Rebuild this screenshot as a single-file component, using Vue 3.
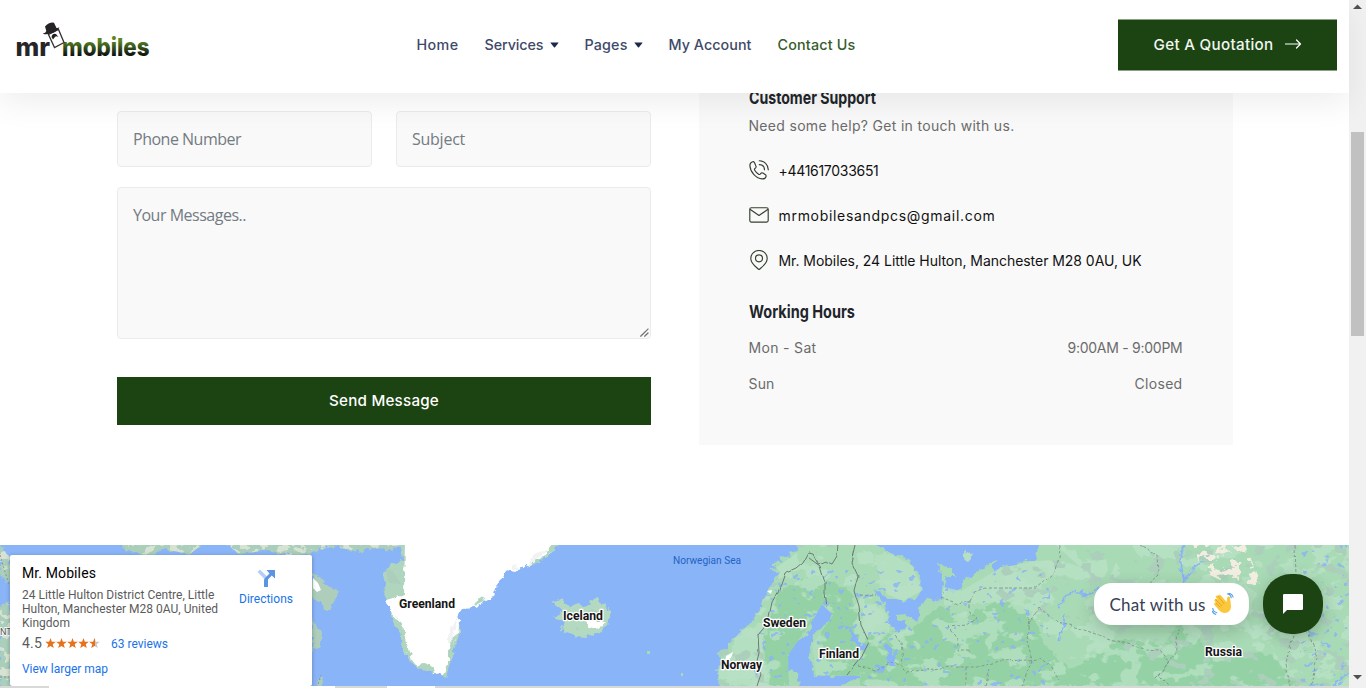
<script setup>
const nav = [
  { label: 'Home', w: 42 },
  { label: 'Services', w: 59, menu: true },
  { label: 'Pages', w: 43, menu: true },
  { label: 'My Account', w: 83 },
  { label: 'Contact Us', w: 78, active: true }
]
const hours = [
  { day: 'Mon - Sat', dw: 68, time: '9:00AM - 9:00PM', tw: 115 },
  { day: 'Sun', dw: 26, time: 'Closed', tw: 48 }
]
const labels = [
  { t: 'Greenland', x: 399, y: 608, w: 56 },
  { t: 'Iceland', x: 563, y: 620, w: 40 },
  { t: 'Sweden', x: 763, y: 627, w: 43 },
  { t: 'Finland', x: 819, y: 658, w: 40 },
  { t: 'Norway', x: 721, y: 669, w: 41 },
  { t: 'Russia', x: 1205, y: 656, w: 37 }
]

// Tracks a single-line label so that it fills the given width.
const vFit = {
  mounted(el, { value }) {
    const natural = el.getBoundingClientRect().width
    el.style.letterSpacing = (value - natural) / el.textContent.length + 'px'
  }
}
</script>

<template>
  <div class="screen">
    <div class="page">
      <header class="header">
        <svg class="logo" width="140" height="48" viewBox="12 16 140 48">
          <defs>
            <linearGradient id="leaf" x1="0" y1="0" x2="0" y2="1">
              <stop offset=".3" stop-color="#5d8422" />
              <stop offset=".52" stop-color="#38541c" />
              <stop offset=".78" stop-color="#10150f" />
            </linearGradient>
          </defs>
          <text class="brand" x="15.500" y="55.500" textLength="34.500" lengthAdjust="spacingAndGlyphs" fill="#282529">mr</text>
          <text class="brand" x="62" y="55.500" textLength="87.500" lengthAdjust="spacingAndGlyphs" fill="url(#leaf)">mobiles</text>
          <path d="M48.500 34.500 58.500 29.500 64 42.500 54.500 47.500Z" fill="#fff" stroke="#333" stroke-width="1.300" />
          <path d="M51.500 37q.8-4 4.500-3l2.500 3q-2.500-1.300-3.500 0l-2 2.500Z" fill="#222" />
          <path d="M42.800 33.500q3-.5 3.500-2.500l-1.300-4.500q4-4.500 9-3.800l2.500 5.300q1.500.3 3-.7-2 4-8 6-6 2-8.700.2" fill="#262327" />
        </svg>
        <nav class="nav">
          <a v-for="n in nav" :key="n.label" :class="{ active: n.active }">
            <span v-fit="n.w">{{ n.label }}</span>
            <svg v-if="n.menu" width="9" height="6" viewBox="0 0 9 6"><path d="M.8.5h7.400q.7 0 .2.600L5 5.200q-.5.500-1 0L.6 1.100Q.1.500.8.500" fill="#1b2850" /></svg>
          </a>
        </nav>
        <a class="quote">
          <span v-fit="120">Get A Quotation</span>
          <svg width="17" height="12" viewBox="0 0 17 12"><path d="M.5 6h15M11.500 2l4 4-4 4" fill="none" stroke="#fff" stroke-width="1.200" stroke-linecap="round" stroke-linejoin="round" /></svg>
        </a>
      </header>

      <main class="main">
        <form class="form">
          <div class="field"><span v-fit="108">Phone Number</span></div>
          <div class="field"><span v-fit="53">Subject</span></div>
          <div class="field message">
            <span v-fit="113">Your Messages..</span>
            <svg class="grip" width="9" height="9" viewBox="0 0 9 9"><path d="M.5 8.500l8-8M4.500 8.500l4-4" stroke="#444" stroke-width="1.100" stroke-dasharray="1.100 .3" /></svg>
          </div>
          <button type="button" class="send"><span v-fit="110">Send Message</span></button>
        </form>

        <aside class="support">
          <svg class="heading" width="130" height="24"><text x="0" y="18" textLength="127" lengthAdjust="spacingAndGlyphs">Customer Support</text></svg>
          <p class="help"><span v-fit="266">Need some help? Get in touch with us.</span></p>
          <div class="contact">
            <svg width="20" height="20" viewBox="0 0 20 20" class="icon">
              <path d="M3.500 1.700C2 2.200.8 3.700.9 5.800c.4 6.500 6.300 12.700 12.300 13.100 2.200.1 3.600-1.100 3.900-2.600.1-.6-.1-1.100-.6-1.500l-2.600-1.700c-.8-.5-1.500-.4-2.100.3l-.6.700c-.5.500-1 .5-1.600.1-1.600-1.100-3-2.500-3.900-4-.4-.7-.3-1.200.2-1.700l.7-.6c.6-.6.7-1.200.3-2L5.400 2.500c-.5-.8-1.100-1.100-1.900-.8Z" />
              <path d="M10.300.8c5 .1 8.900 3.900 9 9M10.300 4.600c3 .1 5.100 2.200 5.200 5.200" />
            </svg>
            <span v-fit="100">+441617033651</span>
          </div>
          <div class="contact">
            <svg width="20" height="20" viewBox="0 0 20 20" class="icon">
              <rect x=".8" y="2.700" width="18.400" height="14.400" rx="1.500" /><path d="m1.300 4.500 8.700 6 8.700-6" />
            </svg>
            <span v-fit="217">mrmobilesandpcs@gmail.com</span>
          </div>
          <div class="contact">
            <svg width="20" height="20" viewBox="0 0 20 20" class="icon">
              <path d="M10 .5C5.300.5 1.800 4 1.800 8.400 1.800 13.500 6.200 16.200 10 19.600c3.800-3.400 8.200-6.100 8.200-11.200C18.200 4 14.700.5 10 .5Z" /><circle cx="10" cy="8.300" r="3.500" />
            </svg>
            <span v-fit="363">Mr. Mobiles, 24 Little Hulton, Manchester M28 0AU, UK</span>
          </div>
          <svg class="heading hours-title" width="130" height="24"><text x="0" y="18" textLength="106" lengthAdjust="spacingAndGlyphs">Working Hours</text></svg>
          <div v-for="h in hours" :key="h.day" class="hours">
            <span v-fit="h.dw">{{ h.day }}</span><span v-fit="h.tw">{{ h.time }}</span>
          </div>
        </aside>
      </main>

      <section class="map">
        <svg class="canvas" width="1349" height="141" viewBox="0 545 1349 141">
          <defs>
            <filter id="coast" filterUnits="userSpaceOnUse" x="0" y="545" width="1349" height="141">
              <feTurbulence type="fractalNoise" baseFrequency=".16" numOctaves="2" seed="4" />
              <feDisplacementMap in="SourceGraphic" scale="8" xChannelSelector="R" yChannelSelector="G" />
            </filter>
            <filter id="border" filterUnits="userSpaceOnUse" x="0" y="545" width="1349" height="141">
              <feTurbulence type="fractalNoise" baseFrequency=".09" numOctaves="1" seed="6" />
              <feDisplacementMap in="SourceGraphic" scale="5" xChannelSelector="R" yChannelSelector="G" />
            </filter>
            <filter id="light" filterUnits="userSpaceOnUse" x="0" y="545" width="1349" height="141" color-interpolation-filters="sRGB">
              <feTurbulence type="fractalNoise" baseFrequency=".035 .05" numOctaves="4" seed="12" />
              <feColorMatrix values="0 0 0 0 .735  0 0 0 0 .89  0 0 0 0 .785  22 0 0 0 -11.600" />
              <feComposite in2="SourceAlpha" operator="in" />
            </filter>
            <filter id="shade" filterUnits="userSpaceOnUse" x="0" y="545" width="1349" height="141" color-interpolation-filters="sRGB">
              <feTurbulence type="fractalNoise" baseFrequency=".06 .08" numOctaves="3" seed="31" />
              <feColorMatrix values="0 0 0 0 .67  0 0 0 0 .81  0 0 0 0 .735  0 20 0 0 -12.300" />
              <feComposite in2="SourceAlpha" operator="in" />
            </filter>
            <filter id="sand" filterUnits="userSpaceOnUse" x="0" y="545" width="1349" height="141" color-interpolation-filters="sRGB">
              <feTurbulence type="fractalNoise" baseFrequency=".1 .13" numOctaves="3" seed="8" />
              <feColorMatrix values="0 0 0 0 .95  0 0 0 0 .93  0 0 0 0 .88  0 0 20 0 -10.600" />
              <feComposite in2="SourceAlpha" operator="in" />
            </filter>
            <filter id="lakes" filterUnits="userSpaceOnUse" x="0" y="545" width="1349" height="141" color-interpolation-filters="sRGB">
              <feTurbulence type="fractalNoise" baseFrequency=".13 .16" numOctaves="2" seed="19" />
              <feColorMatrix values="0 0 0 0 .54  0 0 0 0 .705  0 0 0 0 .97  0 0 25 0 -16.800" />
              <feComposite in2="SourceAlpha" operator="in" />
            </filter>
            <path id="eurasia" d="M796 540 799 551 789 553 791 558 779 556 783 562 772 563 776 568 767 571 780 572 774 580 769 590 763 600 762 608 754 618 745 628 738 634 731 642 727 648 718 653 720 660 718 672 719 690H1355V540H1103L1106 554 1108 570 1098 589 1104 592 1114 575 1116 562 1124 568 1129 580 1138 578 1130 564 1118 554 1113 540H1050L1062 555 1080 567 1078 559 1067 545 1040 540 1035 561 1024 561 1012 564 1000 568 990 577 996 559 983 568 973 575 963 582 961 591 952 592 944 587 947 577 955 577 952 568 937 564 943 578 941 601 929 598 920 607 918 620 910 617 904 614 898 615 898 621 907 620 905 630 895 632 889 624 886 607 873 589 889 597 904 601 917 598 923 590 921 577 912 565 903 556 889 553 867 540Z" />
            <path id="forest" d="M780 590 815 575 850 590 857 620 870 636 887 630 900 640 920 621 940 607 962 618 1000 600 1030 608 1045 645 1070 670 1120 640 1165 645 1180 620 1210 650 1270 655 1300 686H770L763 645Z" />
            <path id="arctic" d="M0 540H120L124 549 150 556 162 549 190 554 206 541 222 540 239 554 270 550 290 556 310 552 335 546 350 550 361 552 370 547 385 549 402 545V540H402Z M0 606 10 602V690H0Z M0 545 10 558V585L0 575Z" />
          </defs>
          <rect y="545" width="1349" height="141" fill="#8ab4f8" />

          <g filter="url(#coast)">
            <use href="#eurasia" fill="#a8dab5" />
            <path d="M815 607 822 604 830 606 833 615 827 623 818 630 812 638 810 647 812 670 815 675 837 677 857 672 862 677 847 682 837 690H800L797 673 787 670 788 655 793 643 807 635 813 620Z" fill="#8ab4f8" />
            <use href="#arctic" fill="#a9cfbb" />
            <path d="M312 573 322 578 328 586 339 591 335 600 328 613 321 606 312 598Z M312 618 322 634 321 646 312 651Z M320 675 324 686H316Z M386 545 394 547 392 552 385 550Z" fill="#aecdbb" />
            <path d="M400 540 403 560 388 567 383 580 384 594 390 606 393 623 400 633 402 647 409 660 417 669 433 671 446 677 454 650 460 632 448 560Z" fill="#b0d5be" />
            <path d="M405 540H557L549 555 527 565 515 572 506 570 498 583 493 597 483 603 475 607 462 608 458 613 459 623 455 643 448 650 448 663 442 677 433 670 424 664 417 667 409 653 405 640 403 622 392 615 386 600 404 595Z" fill="#fff" />
            <path d="M552 603 562 598 570 607 577 602 586 607 595 598 605 604 611 613 608 624 600 634 585 637 574 636 562 631 565 621 553 618 563 611Z" fill="#b3dac0" />
            <path d="M591 616 606 621 600 628 592 629 586 622Z" fill="#fff" />
            <ellipse cx="968" cy="556" rx="5" ry="5" fill="#b8dfc5" />
            <path d="M446 641 458 614 452 646Z M536 553 548 550 525 569Z M513 563 520 570 510 568Z" fill="#f1f2f3" />
            <path d="M543 557 552 545H558L547 556 536 563 528 565ZM452 640 457 634 454 646 448 650ZM475 605 480 597 486 600ZM417 667 429 663 434 672Z" fill="#b0d5be" />
          </g>

          <clipPath id="land"><path d="M796 540 799 551 776 568 780 572 763 600 745 628 718 653 719 690H789L788 655 813 620 822 604 833 615 812 645 816 675 860 676V690H1355V540H1113L1135 577 1125 578 1116 562 1104 592 1098 589 1108 570 1103 540H1050L1080 567 1060 560 1035 561 1000 568 961 591 944 587 941 601 920 607 918 620 904 631 895 632 889 624 886 607 873 589 904 601 923 590 912 565 889 553 867 540Z" /></clipPath>
          <g clip-path="url(#land)">
            <use href="#forest" fill="#94d2a5" filter="url(#coast)" />
            <use href="#eurasia" filter="url(#light)" opacity=".7" />
            <path d="M875 553 900 556 922 575V590L905 600 880 590ZM735 640 763 620V686H725ZM943 565 1049 545 1060 565 1030 600 945 605ZM862 605 885 607 890 630 880 640 864 630Z" fill="#b9e1c5" opacity=".75" filter="url(#coast)" />
            <path d="M1020 545H1349V686H1180L1080 620 980 600Z M719 640H764V686H719Z M770 590 835 545H770Z" filter="url(#shade)" />
            <path d="M1193 545H1245L1260 580 1257 596 1230 585 1202 571Z" filter="url(#sand)" />
            <path d="M770 570H1050V686H750Z M1300 545H1349V686H1300Z" filter="url(#lakes)" opacity=".8" />
          </g>
          <use href="#arctic" filter="url(#shade)" /><use href="#arctic" filter="url(#sand)" opacity=".65" />
          <path d="M561 604 606 605 607 632 566 630Z M386 569 400 570 402 602 391 600Z" filter="url(#shade)" />
          <path d="M313 578 318 583 321 590 317 592 313 588Z M726 656 733 652 731 658 725 661Z M767 591 772 590 771 594Z" fill="#fff" />
          <path d="M647 651h3v3h-3Z M681 673h2v3h-2Z" fill="#a8dab5" />

          <g fill="none" stroke="#8ab4f8" stroke-width="1.800" filter="url(#coast)">
            <path d="M1100 588 1087 595 1075 591 1065 597 1059 606M1065 615 1061 635 1059 642M1183 545 1180 562 1185 581M1185 579 1193 568 1203 562M1321 642 1330 647M1349 672 1333 684" />
            <path d="M885 645 891 652 893 662 886 658M850 630 856 640 864 650M876 665 885 668" stroke-width="4" />
          </g>
          <g fill="none" stroke="#6d7a75" stroke-width="1" filter="url(#border)">
            <path d="M838 545 837 556 832 564 825 561 818 564 813 554 808 553 803 562 796 568 785 573 779 590 772 602 768 622 758 634 759 653 756 665 761 674 757 686M809 558 820 566 825 583 825 592 827 607M855 545 851 562 858 577 854 590 859 606 861 625 869 642 863 654 847 674" />
          </g>
          <g fill="none" stroke="#80948a" stroke-width=".9" stroke-dasharray="3 2" filter="url(#border)">
            <path d="M858 665 875 670 890 663 903 665 906 672 925 670 950 667 977 667 1000 661 1029 660M895 635 901 642 903 663M941 597 958 604 970 601 970 612 977 618 966 625 949 627 958 639 958 650 970 650M966 667V686M985 686 990 670M970 601 975 592 986 588H1036L1052 575 1059 560 1060 545M1029 616 1027 642 1032 660 1022 686M1039 608 1054 619 1072 626 1090 632 1110 639 1130 645 1145 649 1160 650 1170 662 1158 675 1169 686M1039 608 1027 626M1139 545 1157 555 1158 575 1145 587M1155 678 1175 655 1179 628M1295 545 1296 575 1306 607 1300 620 1290 643 1286 665 1290 686M1306 625 1317 658 1311 686M860 594 876 595M1029 661 1040 658 1050 666 1059 680" />
          </g>
          <path d="M0 555 9 585M0 677H9M318 684 321 675" stroke="#89948f" stroke-dasharray="2 2" fill="none" />
          <text x="0" y="635" class="small-label">NT</text>
          <text x="673" y="564" class="sea" textLength="68" lengthAdjust="spacingAndGlyphs">Norwegian Sea</text>
          <text v-for="l in labels" :key="l.t" class="country" :x="l.x" :y="l.y" :textLength="l.w" lengthAdjust="spacingAndGlyphs">{{ l.t }}</text>
        </svg>

        <div class="place">
          <div class="place-info">
            <div class="place-name"><span v-fit="74">Mr. Mobiles</span></div>
            <div class="address">24 Little Hulton District Centre, Little<br />Hulton, Manchester M28 0AU, United<br />Kingdom</div>
            <div class="rating">
              <span v-fit="20">4.5</span>
              <svg width="55" height="11" viewBox="0 0 55 11">
                <defs>
                  <path id="star" d="m5.500 0 1.350 3.700 3.950.15-3.100 2.430L8.800 10.100 5.500 7.900 2.200 10.100l1.100-3.820L.2 3.850l3.950-.15Z" />
                  <linearGradient id="half"><stop offset=".55" stop-color="#e7711b" /><stop offset=".55" stop-color="#c8c8c8" /></linearGradient>
                </defs>
                <use v-for="i in 5" :key="i" href="#star" :x="(i - 1) * 11" :fill="i === 5 ? 'url(#half)' : '#e7711b'" />
              </svg>
              <a v-fit="57">63 reviews</a>
            </div>
            <a class="larger" v-fit="86">View larger map</a>
          </div>
          <div class="directions">
            <svg width="20" height="20" viewBox="0 0 20 20">
              <path d="M4 1.500 1.500 4 9.500 12l2.500-2.500Z" fill="#b7cff5" />
              <path d="M8 19V12.500q0-1.500 1-2.500l4.500-4.500L10.500 2H19v8.500l-3.200-3L12 11.500V19Z" fill="#5b94e3" />
            </svg>
            <a v-fit="54">Directions</a>
          </div>
        </div>

        <div class="chat">
          <div class="bubble">
            <span v-fit="96">Chat with us</span>
            <svg width="22" height="22" viewBox="0 0 22 22">
              <path d="M3.200 6.300C4 5.300 5 5.700 5.500 6.300L3.900 4.600C3.200 3 5 2 6 3L6.500 2.300C7.500 1 9 2 9.400 3l5.200 6 .5-3.800c.2-2.500 3-2 3 .1l.9 7.700c.3 4-2.600 7-6.200 7-2.800 0-4.500-1.500-6.100-3.300L2.500 12C1.300 10.500 2.700 9.200 4 10L2.300 7.900Z" fill="#fbc83d" />
              <path d="m4 10 4.300 4.500M3.200 6.300l7 6.700M6 3l6.300 8" stroke="#e39b22" stroke-width=".8" fill="none" />
              <path d="M15 .8q4 .7 4.300 4.500M16.500.1q4 .7 4.800 4.400M.7 15q.4 4 4.500 4.800M.2 18q1 2.700 4 3.500" stroke="#4b9ee8" stroke-width="1.100" fill="none" />
            </svg>
          </div>
          <div class="launcher">
            <svg width="20" height="20" viewBox="0 0 20 20"><path d="M1.300 0h17.400Q20 0 20 1.300v13.400q0 1.300-1.300 1.300H4L0 20V1.300Q0 0 1.300 0Z" fill="#fff" /></svg>
          </div>
        </div>
      </section>
      <footer class="edge"><i /><i /></footer>
    </div>

    <div class="scrollbar">
      <svg width="9" height="5" viewBox="0 0 9 5"><path d="M0 5 4.500.500 9 5Z" fill="#505050" /></svg>
      <div class="thumb" />
      <svg width="9" height="5" viewBox="0 0 9 5"><path d="M0 0h9L4.500 4.500Z" fill="#505050" /></svg>
    </div>
  </div>
</template>

<style>
html, body { margin: 0; overflow: hidden; background: #fff; }
</style>

<style scoped>
.screen { display: flex; width: 1366px; height: 688px; overflow: hidden; font-family: Inter, "Open Sans", sans-serif; }
.screen * { box-sizing: border-box; }
.screen span, .screen a { white-space: nowrap; }
.page { width: 1349px; height: 688px; display: flex; flex-direction: column; }
svg { display: block; flex: none; }
.header { position: relative; z-index: 2; height: 93px; flex: none; display: flex; align-items: center; background: #fff; box-shadow: 0 10px 30px rgba(0, 0, 0, .07); }
.logo { margin: -13px 0 0 12px; }
.brand { font: 800 25px Inter, sans-serif; }
.nav { display: flex; gap: 26px; margin: -4px 0 0 264.500px; color: #404969; font-size: 14.300px; font-weight: 450; line-height: 20px; }
.nav a { display: flex; align-items: center; gap: 6px; }
.nav .active { color: #355c2d; }
.quote { width: 219px; height: 52px; margin: -5px 12px 0 auto; padding-bottom: 1px; display: flex; align-items: center; justify-content: center; gap: 11px; background: #1b4412; border: solid #8ba086; border-width: 1px 0; color: #f2f5f1; font-size: 15.200px; font-weight: 450; position: relative; top: .5px; }
.main { height: 452px; flex: none; display: flex; gap: 48px; padding-left: 117px; }
.form { width: 534px; display: grid; grid-template-columns: 255px 255px; grid-template-rows: 56px 152px 48px; column-gap: 24px; row-gap: 20px; padding-top: 18px; }
.field { background: #f9f9f9; border: 1px solid #ebebeb; border-radius: 4px; padding: 15px 15px; color: #737b83; font: 16px/24px "Open Sans", sans-serif; }
.message { grid-column: 1 / 3; position: relative; }
.grip { position: absolute; right: 1px; bottom: 1px; }
.send { grid-column: 1 / 3; margin-top: 18px; height: 48px; padding: 0 0 1px; border: 0; background: #1b4412; color: #fff; font: 450 15.200px Inter, sans-serif; }
.support { width: 534px; height: 370px; margin-top: -18px; padding: 11px 50.500px 0 49.500px; background: #f9f9f9; color: #6b6b6b; font-size: 14px; line-height: 22px; }
.heading { fill: #212529; font: 700 17.800px Inter, sans-serif; }
.help { margin: 5px 0 0; height: 22px; }
.contact { height: 22px; margin-top: 23px; display: flex; align-items: center; gap: 10px; color: #111; }
.contact span { padding-top: 2px; }
.help + .contact { margin-top: 22px; }
.icon { fill: none; stroke: #34402f; stroke-width: 1.150; stroke-linejoin: round; stroke-linecap: round; }
.hours-title { margin-top: 29px; }
.hours { display: flex; justify-content: space-between; margin-top: 14px; }
.hours-title + .hours { margin-top: 13px; }
.map { position: relative; width: 1349px; height: 141px; flex: none; overflow: hidden; }
.canvas { position: absolute; inset: 0; }
.country { font: 700 12px Roboto, sans-serif; fill: #151515; stroke: #fff; stroke-width: 2.500px; paint-order: stroke; stroke-linejoin: round; }
.sea { font: 11px Roboto, sans-serif; fill: #2463c3; }
.small-label { font: 9px Roboto, sans-serif; fill: #555; stroke: #fff; stroke-width: 1.500px; paint-order: stroke; }
.place { position: absolute; left: 10px; top: 10px; width: 302px; height: 131px; display: flex; padding: 9px 12px 0; background: #fff; border-radius: 2px; box-shadow: 0 1px 4px rgba(0, 0, 0, .3); font: 12px/14px Roboto, sans-serif; color: #5b5b5b; }
.place a { color: #1a73e8; }
.place-info { width: 217px; }
.place-name { color: #000; font-size: 14px; font-weight: 450; line-height: 18px; }
.address { margin-top: 6px; white-space: nowrap; }
.rating { display: flex; align-items: center; height: 16px; margin-top: 5px; }
.rating span { font-size: 14px; }
.rating a { padding-top: 1px; }
.rating svg { margin: 0 11px 0 3px; }
.larger { display: inline-block; margin-top: 11px; }
.directions { width: 54px; display: flex; flex-direction: column; align-items: center; gap: 4px; padding-top: 4px; }
.chat { position: absolute; right: 26px; top: 29px; display: flex; align-items: center; gap: 14px; }
.bubble { height: 42px; width: 155px; display: flex; align-items: center; justify-content: center; gap: 6px; border-radius: 18px; background: #fff; color: #364056; font: 17px Lato, sans-serif; box-shadow: 0 5px 18px rgba(0, 0, 0, .2); }
.launcher { width: 60px; height: 60px; display: flex; align-items: center; justify-content: center; border-radius: 28px; background: #1b4412; box-shadow: 0 4px 16px rgba(0, 0, 0, .22); }
.edge { height: 2px; display: flex; gap: 52px; padding-left: 49px; background: #d7d9d7; }
.edge i { width: 286px; background: #fff; }
.edge i + i { width: 48px; }
.scrollbar { width: 17px; height: 688px; background: #f1f1f1; display: flex; flex-direction: column; align-items: center; padding: 4px 0 8px; }
.thumb { width: 13px; height: 204px; margin-top: 123px; margin-bottom: auto; background: #c1c1c1; }
</style>
